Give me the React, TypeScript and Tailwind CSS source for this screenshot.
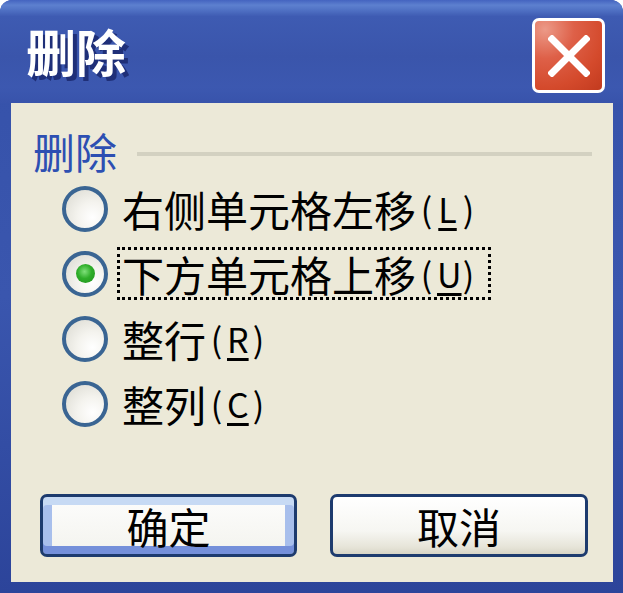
import React from "react";

const cjk = { fontFamily: '"Noto Sans CJK SC", "Noto Sans", sans-serif' };

function Radio({ checked }: { checked?: boolean }) {
  return (
    <div className="w-[46px] h-[46px] rounded-full border-[4px] border-[#3a6593] bg-[radial-gradient(circle_at_70%_72%,#ffffff_0%,#f4f3ee_40%,#d9d8cf_100%)] flex items-center justify-center shrink-0">
      {checked && (
        <div className="w-[19px] h-[19px] rounded-full bg-[radial-gradient(circle_at_45%_40%,#7fe07a_0%,#2fae2a_45%,#1f8f1c_100%)]" />
      )}
    </div>
  );
}

function Mn({ k }: { k: string }) {
  return (
    <span className="inline-flex">
      <span className="inline-block w-[21px] text-center">(</span>
      <span className="inline-block w-[21px] text-center underline decoration-[3px] underline-offset-[5px]">{k}</span>
      <span className="inline-block w-[21px] text-center">)</span>
    </span>
  );
}

function Row({ text, k, checked }: { text: string; k: string; checked?: boolean }) {
  return (
    <div className="h-[65px] flex items-center">
      <Radio checked={checked} />
      <div
        className={
          "ml-[9px] h-[53px] flex items-center pl-[2px] pr-[9px] border-[3px] border-dotted " +
          (checked ? "border-black" : "border-transparent")
        }
      >
        <span className="text-[42px] leading-[42px] text-black">{text}</span>
        <span className="text-[34px] leading-[42px] text-black">
          <Mn k={k} />
        </span>
      </div>
    </div>
  );
}

export default function App() {
  return (
    <div className="w-[623px] h-[593px] bg-white" style={cjk}>
      <div className="w-full h-full rounded-t-[12px] overflow-hidden flex flex-col bg-[linear-gradient(to_bottom,#3551a9,#3a56ae_50%,#2c449a)]">
        {/* title bar */}
        <div className="h-[103px] shrink-0 flex items-start justify-between bg-[linear-gradient(to_bottom,#4464c0_0%,#5d80cf_5%,#5274c6_9%,#3e5bb2_16%,#3a55ab_55%,#3c58b0_85%,#3853ab_100%)]">
          <div className="pl-[26px] pt-[22px] text-[50px] leading-[56px] font-bold text-white [text-shadow:4px_4px_0_#1f2f78]">
            删除
          </div>
          <div className="mt-[18px] mr-[18px] w-[73px] h-[75px] rounded-[7px] border-[3px] border-white bg-[radial-gradient(circle_at_15%_12%,#ec9a88_0%,#de6048_35%,#d44a2c_70%,#c23a1e_100%)] flex items-center justify-center">
            <svg width="42" height="42" viewBox="0 0 42 42">
              <path d="M4 4 L38 38 M38 4 L4 38" stroke="#ffffff" strokeWidth="7" strokeLinecap="square" />
            </svg>
          </div>
        </div>
        {/* body */}
        <div className="flex-1 ml-[11px] mr-[10px] mb-[11px] bg-[#ece9d8] flex flex-col">
          <div className="mt-[27px] h-[42px] flex items-center pl-[22px]">
            <span className="text-[42px] leading-[42px] text-[#2d4fb2]">删除</span>
            <div className="flex-1 ml-[20px] mr-[21px] h-[4px] bg-[#d3d1c1] mt-[6px]" />
          </div>
          <div className="mt-[4px] flex flex-col pl-[51px]">
            <Row text="右侧单元格左移" k="L" />
            <Row text="下方单元格上移" k="U" checked />
            <Row text="整行" k="R" />
            <Row text="整列" k="C" />
          </div>
          <div className="mt-auto mb-[25px] pl-[29px] flex gap-[33px]">
            <div className="w-[257px] h-[63px] rounded-[7px] border-[3px] border-[#1d3b6e] bg-[linear-gradient(to_bottom,#fdfdfc,#f3f3ee)] shadow-[inset_0_8px_0_#c7daf4,inset_0_-8px_0_#7590da,inset_9px_0_0_#a8bfec,inset_-9px_0_0_#a8bfec] flex items-center justify-center">
              <span className="text-[42px] leading-[42px] text-black">确定</span>
            </div>
            <div className="w-[258px] h-[63px] rounded-[7px] border-[3px] border-[#1d3b6e] bg-[linear-gradient(to_bottom,#ffffff_0%,#f6f6f2_60%,#e6e4d8_88%,#d8d5c6_100%)] flex items-center justify-center">
              <span className="text-[42px] leading-[42px] text-black">取消</span>
            </div>
          </div>
        </div>
      </div>
    </div>
  );
}
